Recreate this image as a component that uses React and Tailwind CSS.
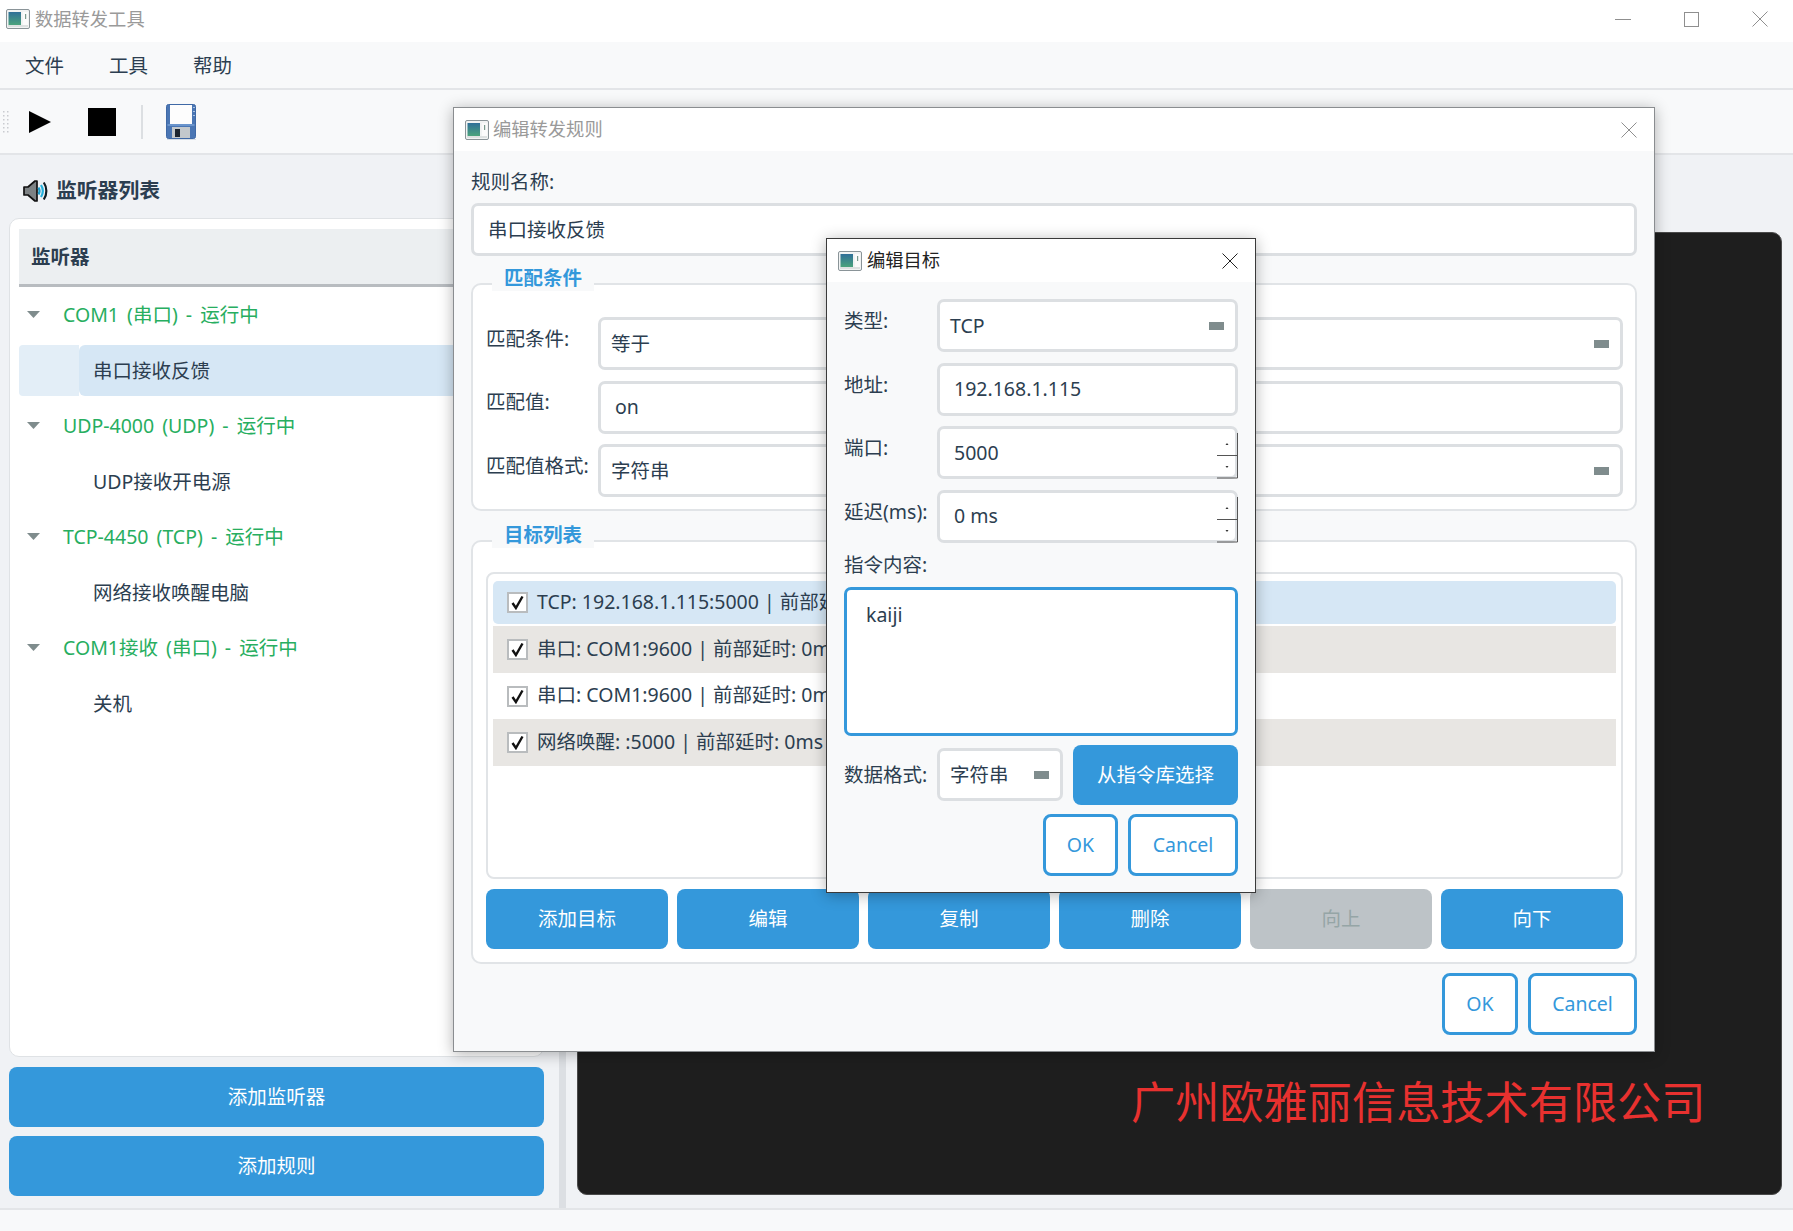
import React from "react";

const AppIcon = () => (
  <svg width="24" height="20" viewBox="0 0 24 20" className="shrink-0">
    <defs>
      <linearGradient id="ai" x1="0" y1="0" x2="0" y2="1">
        <stop offset="0" stopColor="#2f6f98" />
        <stop offset="1" stopColor="#4aa37c" />
      </linearGradient>
    </defs>
    <rect x="0.5" y="0.5" width="23" height="19" rx="1.5" fill="#f1f3f3" stroke="#8a9498" />
    <rect x="2.5" y="3" width="12.5" height="13" fill="url(#ai)" />
    <rect x="17" y="3" width="5" height="13" fill="#fbfbfb" />
    <rect x="19" y="5" width="1.2" height="5" fill="#7b9a8e" />
    <rect x="2" y="16.5" width="20" height="1" fill="#c9cfd0" />
  </svg>
);

const XIcon = ({ color, size = 16 }) => (
  <svg width={size} height={size} viewBox="0 0 16 16" className="shrink-0">
    <path d="M0.5 0.5L15.5 15.5M15.5 0.5L0.5 15.5" stroke={color} strokeWidth="1" fill="none" />
  </svg>
);

const Speaker = () => (
  <svg width="25" height="22" viewBox="0 0 25 22" className="shrink-0">
    <path d="M1 7h4l7-6h2v20h-2l-7-6H1z" fill="#7d8284" stroke="#111" strokeWidth="1.7" strokeLinejoin="round" />
    <path d="M15.5 7.5c1.2 2 1.2 5 0 7" stroke="#1e9cc9" strokeWidth="2.2" fill="none" />
    <path d="M18 5c2.2 3.6 2.2 8.4 0 12" stroke="#23b0dc" strokeWidth="2.2" fill="none" />
    <path d="M20.8 2.5c3.4 5 3.4 12 0 17" stroke="#101c23" strokeWidth="2.2" fill="none" />
  </svg>
);

const Floppy = () => (
  <svg width="30" height="36" viewBox="0 0 30 36" className="shrink-0">
    <rect x="0.5" y="0.5" width="29" height="34" rx="2" fill="#4a76b4" stroke="#3f69a6" />
    <rect x="4" y="1" width="22" height="19" fill="#fdfdfd" />
    <rect x="1.5" y="20" width="27" height="2" fill="#6a94cc" />
    <rect x="6" y="23" width="18" height="11" fill="#c3c8cc" />
    <rect x="9" y="25" width="5" height="8" fill="#1c2530" />
    <rect x="27" y="3" width="2" height="1" fill="#a9c4e4" />
    <rect x="27" y="7" width="2" height="1" fill="#a9c4e4" />
    <rect x="27" y="11" width="2" height="1" fill="#a9c4e4" />
    <rect x="1" y="35" width="29" height="1" fill="#d5dde6" />
  </svg>
);

const TreeArrow = () => (
  <svg width="13" height="7" viewBox="0 0 13 7" className="shrink-0">
    <path d="M0 0h13L6.5 7z" fill="#7f8c8d" />
  </svg>
);

const TreeParent = ({ text }) => (
  <div className="h-[55.5px] flex items-center pl-[8px] text-[#27ae60]">
    <TreeArrow />
    <span className="ml-[23px] [word-spacing:3px]">{text}</span>
  </div>
);

const TreeChild = ({ text, selected }) => (
  <div className="h-[55.5px] flex items-center">
    {selected ? (
      <div className="flex w-full h-[51px]">
        <div className="w-[60px] bg-[#e3eef7] rounded-l-[4px]" />
        <div className="flex-1 bg-[#d6e7f5] rounded-l-[6px] flex items-center pl-[14px]">{text}</div>
      </div>
    ) : (
      <span className="pl-[74px]">{text}</span>
    )}
  </div>
);

const Chip = () => <div className="w-[15px] h-[8px] bg-[#7f8c8d] shrink-0" />;

const Combo = ({ text, className = "flex-1" }) => (
  <div className={`${className} h-[53px] bg-white border-[3px] border-[#dcdfe2] rounded-[7px] flex items-center justify-between pl-[10px] pr-[11px]`}>
    <span>{text}</span>
    <Chip />
  </div>
);

const Input = ({ text, className = "flex-1" }) => (
  <div className={`${className} h-[53px] bg-white border-[3px] border-[#dcdfe2] rounded-[7px] flex items-center pl-[14px]`}>
    <span>{text}</span>
  </div>
);

const Spin = ({ text }) => (
  <div className="flex-1 relative h-[53px] bg-white border-[3px] border-[#dcdfe2] rounded-[7px] flex items-center pl-[14px]">
    <span>{text}</span>
    <svg width="22" height="49" viewBox="0 0 22 49" className="absolute right-[-3px] top-[1px]">
      <path d="M21.5 3V48H1M1 25.5H21" stroke="#555" strokeWidth="1" fill="none" />
      <path d="M9.5 15l1.5-2 1.5 2z" fill="#333" />
      <path d="M9.5 36l1.5 2 1.5-2z" fill="#333" />
    </svg>
  </div>
);

const Row = ({ label, children }) => (
  <div className="flex items-center">
    <div className="w-[93px] shrink-0 pb-[9px]">{label}</div>
    {children}
  </div>
);

const GroupRow = ({ label, children }) => (
  <div className="flex items-center">
    <div className="w-[112px] shrink-0 pb-[10px]">{label}</div>
    {children}
  </div>
);

const GroupBox = ({ title, className, children }) => (
  <div className={`relative bg-white border-2 border-[#e1e4e7] rounded-[10px] ${className}`}>
    <div className="absolute left-[19px] top-[-20px] px-[12px] h-[26px] bg-[#f8f9fa] flex items-center font-bold text-[#3498db]">
      {title}
    </div>
    {children}
  </div>
);

const Blue = ({ children, className = "" }) => (
  <div className={`h-[60px] bg-[#3498db] rounded-[8px] text-white flex items-center justify-center ${className}`}>
    {children}
  </div>
);

const Outline = ({ children, className = "" }) => (
  <div className={`h-[62px] bg-white border-[3px] border-[#3498db] rounded-[8px] text-[#3498db] flex items-center justify-center ${className}`}>
    {children}
  </div>
);

const ListItem = ({ text, className }) => (
  <div className={`flex items-center pl-[14px] ${className}`}>
    <div className="w-[21px] h-[21px] bg-white border-2 border-[#b9bcbe] flex items-center justify-center shrink-0">
      <svg width="15" height="15" viewBox="0 0 15 15">
        <path d="M2.5 8l3.4 5L12.5 1.5" stroke="#111" strokeWidth="2.4" fill="none" />
      </svg>
    </div>
    <span className="ml-[9px] -mt-[2px] whitespace-nowrap">{text}</span>
  </div>
);

export default function App() {
  return (
    <div className="relative w-[1793px] h-[1231px] overflow-hidden flex flex-col bg-[#f0f2f5] text-[#2c3e50] text-[19.5px] font-['Noto_Sans','Noto_Sans_CJK_SC',sans-serif]">
      {/* title bar */}
      <div className="h-[42px] bg-white flex items-center pl-[6px] pb-[4px] shrink-0">
        <AppIcon />
        <span className="ml-[5px] text-[18.3px] text-[#9a9a9a]">数据转发工具</span>
        <div className="ml-auto flex items-center pr-[25px] gap-[53px]">
          <div className="w-[16px] h-px bg-[#8f8f8f]" />
          <div className="w-[15px] h-[15px] border border-[#8f8f8f]" />
          <XIcon color="#8f8f8f" />
        </div>
      </div>
      {/* menu */}
      <div className="h-[48px] bg-[#f8f9fa] border-b-2 border-[#e3e5e8] flex items-center pl-[25px] pt-[2px] gap-[45px] shrink-0">
        <span>文件</span>
        <span>工具</span>
        <span>帮助</span>
      </div>
      {/* toolbar */}
      <div className="h-[65px] bg-[#f8f9fa] border-b-2 border-[#e3e5e8] flex items-center shrink-0">
        <svg width="8" height="24" viewBox="0 0 8 24" className="ml-[2px]">
          {[1, 5, 9, 13, 17, 21].map((y) => (
            <g key={y} fill="#c9ccd0">
              <rect x="1" y={y} width="1.5" height="1.5" />
              <rect x="5" y={y} width="1.5" height="1.5" />
            </g>
          ))}
        </svg>
        <svg width="22" height="22" viewBox="0 0 22 22" className="ml-[19px]">
          <path d="M0 0L22 11L0 22z" fill="#000" />
        </svg>
        <div className="w-[28px] h-[28px] bg-black ml-[37px]" />
        <div className="w-[2px] h-[34px] bg-[#dcdfe2] ml-[25px]" />
        <div className="ml-[23px]">
          <Floppy />
        </div>
      </div>
      {/* main */}
      <div className="flex-1 flex min-h-0 pl-[9px]">
        <div className="w-[535px] shrink-0 flex flex-col pb-[12px]">
          <div className="h-[63px] shrink-0 flex items-center pl-[14px] pt-[9px]">
            <Speaker />
            <span className="ml-[8px] text-[20.8px] font-bold">监听器列表</span>
          </div>
          <div className="flex-1 bg-white border border-[#dfe2e5] rounded-[10px] pt-[10px] pl-[9px] pr-[8px] min-h-0">
            <div className="h-[58px] bg-[#eceff1] border-b-[3px] border-[#b8bcc0] flex items-center pl-[12px] font-bold">
              监听器
            </div>
            <TreeParent text="COM1 (串口) - 运行中" />
            <TreeChild text="串口接收反馈" selected />
            <TreeParent text="UDP-4000 (UDP) - 运行中" />
            <TreeChild text="UDP接收开电源" />
            <TreeParent text="TCP-4450 (TCP) - 运行中" />
            <TreeChild text="网络接收唤醒电脑" />
            <TreeParent text="COM1接收 (串口) - 运行中" />
            <TreeChild text="关机" />
          </div>
          <Blue className="mt-[10px] shrink-0">添加监听器</Blue>
          <Blue className="mt-[9px] shrink-0">添加规则</Blue>
        </div>
        <div className="w-[7px] ml-[15px] bg-[#dcdfe3] shrink-0" />
        <div className="flex-1 ml-[11px] mr-[11px] mt-[77px] mb-[13px] bg-[#1e1e1e] border border-[#4a4a4a] rounded-[10px] relative min-w-0">
          <div className="absolute left-[553px] top-[839px] text-[44.2px] leading-[60px] text-[#e8312f] whitespace-nowrap">
            广州欧雅丽信息技术有限公司
          </div>
        </div>
      </div>
      {/* status */}
      <div className="h-[23px] bg-[#f8f9fa] border-t-2 border-[#e3e5e8] shrink-0" />

      {/* rule dialog */}
      <div className="absolute left-[453px] top-[107px] w-[1202px] h-[945px] bg-[#f8f9fa] border border-[#8a8d90] shadow-[0_2px_14px_rgba(0,0,0,0.3)] flex flex-col">
        <div className="h-[43px] bg-white flex items-center pl-[11px] pr-[17px] shrink-0">
          <AppIcon />
          <span className="ml-[4px] -mt-[2px] text-[18.3px] text-[#9a9a9a]">编辑转发规则</span>
          <div className="ml-auto">
            <XIcon color="#8f8f8f" />
          </div>
        </div>
        <div className="flex-1 flex flex-col pl-[17px] pr-[17px] pt-[18px]">
          <div className="h-[26px] flex items-center">规则名称:</div>
          <Input text="串口接收反馈" className="mt-[8px] shrink-0" />
          <GroupBox title="匹配条件" className="mt-[27px] h-[228px] pt-[32px] pl-[13px] pr-[12px] flex flex-col gap-[10.5px]">
            <GroupRow label="匹配条件:">
              <Combo text="等于" />
            </GroupRow>
            <GroupRow label="匹配值:">
              <Input text="on" />
            </GroupRow>
            <GroupRow label="匹配值格式:">
              <Combo text="字符串" />
            </GroupRow>
          </GroupBox>
          <GroupBox title="目标列表" className="mt-[29px] h-[424px] pt-[30px] pl-[13px] pr-[12px]">
            <div className="h-[307px] border-2 border-[#e1e4e7] rounded-[8px] pt-[7px] px-[5px] flex flex-col">
              <ListItem className="h-[43px] bg-[#d6e7f5] rounded-[5px]" text="TCP: 192.168.1.115:5000 | 前部延时: 0ms | 后部延时: 0ms" />
              <ListItem className="h-[47px] mt-[2px] bg-[#e8e6e3]" text="串口: COM1:9600 | 前部延时: 0ms" />
              <ListItem className="h-[46px]" text="串口: COM1:9600 | 前部延时: 0ms" />
              <ListItem className="h-[47px] bg-[#e8e6e3]" text="网络唤醒: :5000 | 前部延时: 0ms" />
            </div>
            <div className="flex gap-[9px] mt-[10px]">
              <Blue className="flex-1">添加目标</Blue>
              <Blue className="flex-1">编辑</Blue>
              <Blue className="flex-1">复制</Blue>
              <Blue className="flex-1">删除</Blue>
              <div className="flex-1 h-[60px] bg-[#bdc3c7] rounded-[8px] text-[#95a5a6] flex items-center justify-center">向上</div>
              <Blue className="flex-1">向下</Blue>
            </div>
          </GroupBox>
          <div className="flex justify-end gap-[10px] mt-[9px]">
            <Outline className="w-[76px]">OK</Outline>
            <Outline className="w-[109px]">Cancel</Outline>
          </div>
        </div>
      </div>

      {/* target dialog */}
      <div className="absolute left-[826px] top-[238px] w-[430px] h-[655px] bg-[#f8f9fa] border border-[#3a3a3a] shadow-[0_2px_14px_rgba(0,0,0,0.3)] flex flex-col">
        <div className="h-[43px] bg-white flex items-center pl-[11px] pr-[17px] shrink-0">
          <AppIcon />
          <span className="ml-[5px] -mt-[2px] text-[18.3px] text-[#222]">编辑目标</span>
          <div className="ml-auto">
            <XIcon color="#222" />
          </div>
        </div>
        <div className="flex-1 flex flex-col pl-[17px] pr-[17px] pt-[17px]">
          <div className="flex flex-col gap-[10.5px]">
            <Row label="类型:">
              <Combo text="TCP" />
            </Row>
            <Row label="地址:">
              <Input text="192.168.1.115" />
            </Row>
            <Row label="端口:">
              <Spin text="5000" />
            </Row>
            <Row label="延迟(ms):">
              <Spin text="0 ms" />
            </Row>
          </div>
          <div className="h-[26px] mt-[9px] flex items-center">指令内容:</div>
          <div className="h-[149px] mt-[9px] bg-white border-[3px] border-[#3498db] rounded-[7px] pl-[19px] pt-[10px] shrink-0">kaiji</div>
          <div className="flex items-center mt-[9px]">
            <div className="w-[93px] shrink-0">数据格式:</div>
            <Combo text="字符串" className="w-[126px] shrink-0" />
            <Blue className="flex-1 ml-[10px]">从指令库选择</Blue>
          </div>
          <div className="flex justify-end gap-[10px] mt-[9px]">
            <Outline className="w-[75px]">OK</Outline>
            <Outline className="w-[110px]">Cancel</Outline>
          </div>
        </div>
      </div>
    </div>
  );
}
